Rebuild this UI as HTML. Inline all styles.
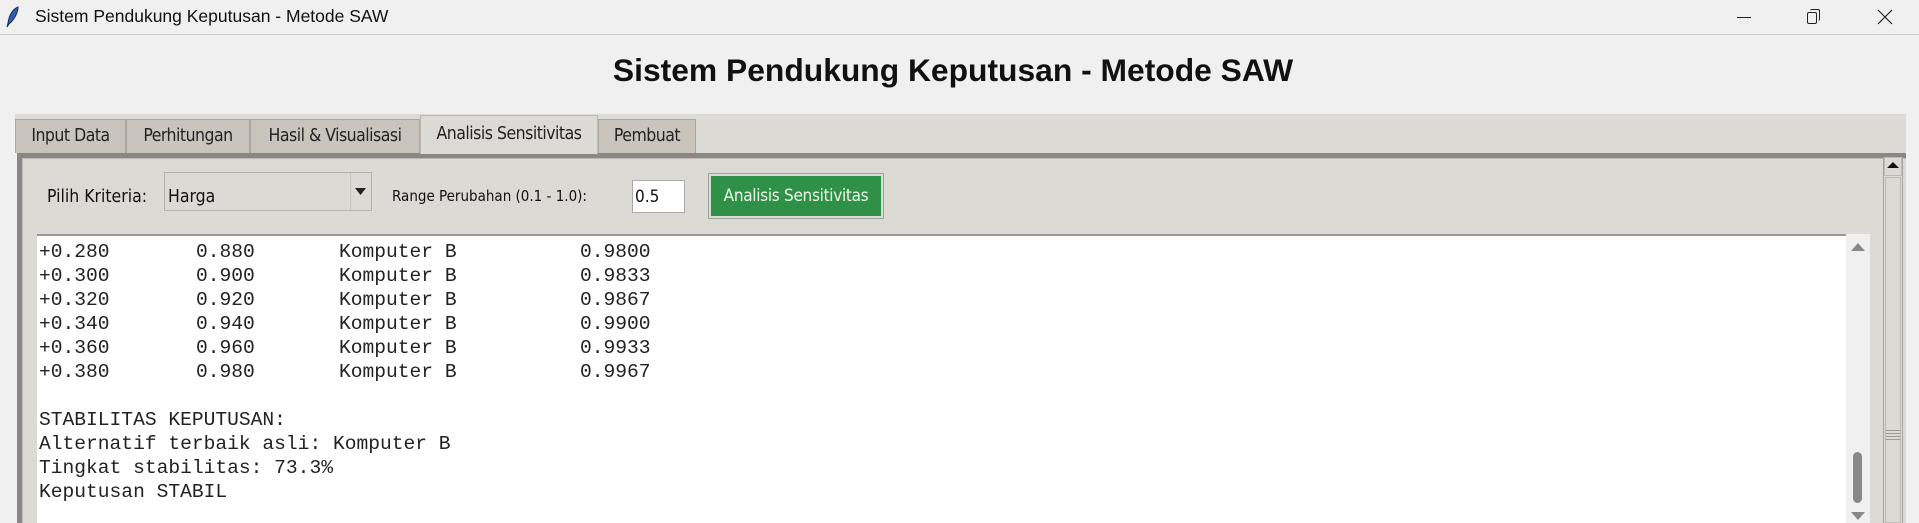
<!DOCTYPE html>
<html><head><meta charset="utf-8">
<style>
*{margin:0;padding:0;box-sizing:border-box}
html,body{width:1919px;height:523px;overflow:hidden;background:#f0f0f0;font-family:"Liberation Sans","DejaVu Sans",sans-serif;position:relative}
.a{position:absolute}
.tb{left:0;top:0;width:1919px;height:35px;background:#f0f0f0;border-bottom:1px solid #cfcfcf}
.tt{left:35px;top:6px;font-size:17.5px;color:#111}
.h1{left:0;width:1906px;top:52px;text-align:center;font-weight:bold;font-size:31.8px;color:#111}
.strip{left:15px;top:114px;width:1891px;height:39px;background:#dcdad5}
.tab{top:119px;height:34px;background:#c9c5bc;border:1px solid #a8a59e;border-bottom:none;font-size:17.5px;color:#222;text-align:center;line-height:33px;font-family:"DejaVu Sans Condensed","DejaVu Sans",sans-serif;letter-spacing:-0.5px;white-space:nowrap}
.tab.on{top:115px;height:39px;background:#dcdad5;line-height:37px}
.panel{left:17px;top:153px;width:1889px;height:370px;background:#dcdad5;border-top:5px solid #8a8884;border-left:5px solid #8a8884;box-shadow:inset 1px 1px 0 #bdbab4}
.lbl{font-size:16px;color:#111;font-family:"DejaVu Sans Condensed","DejaVu Sans",sans-serif;white-space:nowrap}
.txt{left:37px;top:234px;width:1809px;height:289px;background:#fff;border-top:2px solid #9a9893}
.m{position:absolute;font-family:"Liberation Mono","Courier New",monospace;font-size:19.6px;color:#222;line-height:24px;white-space:pre}
</style></head><body>
<div class="a tb"></div>
<svg class="a" style="left:6px;top:6px" width="14" height="22" viewBox="0 0 14 22"><path d="M12 1C7 3 3 9 2 17l-1 4 2-3C8 14 12 7 12 1z" fill="#2f5fae" stroke="#1a2f5a" stroke-width="1"/></svg>
<div class="a tt">Sistem Pendukung Keputusan - Metode SAW</div>
<div class="a" style="left:1737px;top:17px;width:14px;height:1px;background:#222"></div>
<div class="a" style="left:1807px;top:12px;width:10px;height:12px;border:1px solid #222;border-radius:2px"></div>
<div class="a" style="left:1810px;top:9px;width:10px;height:12px;border-top:1px solid #222;border-right:1px solid #222;border-radius:2px"></div>
<svg class="a" style="left:1877px;top:9px" width="16" height="16"><path d="M1 1L15 15M15 1L1 15" stroke="#222" stroke-width="1.2"/></svg>
<div class="a h1">Sistem Pendukung Keputusan - Metode SAW</div>
<div class="a strip"></div>
<div class="a tab" style="left:15px;width:111px">Input Data</div>
<div class="a tab" style="left:126px;width:124px">Perhitungan</div>
<div class="a tab" style="left:250px;width:170px">Hasil &amp; Visualisasi</div>
<div class="a tab" style="left:598px;width:98px">Pembuat</div>
<div class="a panel"></div>
<div class="a tab on" style="left:420px;width:178px;border-color:#bdbab4">Analisis Sensitivitas</div>
<div class="a lbl" style="left:47px;top:187px;font-size:17.5px">Pilih Kriteria:</div>
<div class="a" style="left:164px;top:172px;width:208px;height:39px;background:#dcdad5;border:1px solid #b5b2ac"></div>
<div class="a lbl" style="left:168px;top:187px;font-size:17.5px">Harga</div>
<div class="a" style="left:350px;top:173px;width:1px;height:37px;background:#c5c2bc"></div>
<svg class="a" style="left:355px;top:188px" width="11" height="8"><path d="M0 0H11L5.5 7z" fill="#222"/></svg>
<div class="a lbl" style="left:392px;top:187px;font-size:15px">Range Perubahan (0.1 - 1.0):</div>
<div class="a" style="left:632px;top:180px;width:53px;height:33px;background:#fff;border:1px solid #aaa"></div>
<div class="a lbl" style="left:635px;top:187px;font-size:17px">0.5</div>
<div class="a" style="left:708px;top:173px;width:176px;height:46px;background:#dcdad5;border:1px solid #9aa89a;padding:2px"><div style="width:100%;height:100%;background:#2f9148;color:#eef6e8;font-size:17px;text-align:center;line-height:40px;font-family:'DejaVu Sans Condensed','DejaVu Sans',sans-serif;letter-spacing:-0.3px">Analisis Sensitivitas</div></div>
<div class="a txt">
<div class="m" style="left:2px;top:4px">+0.280
+0.300
+0.320
+0.340
+0.360
+0.380

STABILITAS KEPUTUSAN:
Alternatif terbaik asli: Komputer B
Tingkat stabilitas: 73.3%
Keputusan STABIL</div>
<div class="m" style="left:159px;top:4px">0.880
0.900
0.920
0.940
0.960
0.980</div>
<div class="m" style="left:302px;top:4px">Komputer B
Komputer B
Komputer B
Komputer B
Komputer B
Komputer B</div>
<div class="m" style="left:543px;top:4px">0.9800
0.9833
0.9867
0.9900
0.9933
0.9967</div>
</div>
<div class="a" style="left:1846px;top:234px;width:24px;height:289px;background:#f0f0f0"></div>
<svg class="a" style="left:1851px;top:242px" width="14" height="10"><path d="M0 9L7 1L14 9z" fill="#888"/></svg>
<div class="a" style="left:1853px;top:452px;width:9px;height:51px;background:#888;border-radius:5px"></div>
<svg class="a" style="left:1851px;top:512px" width="14" height="10"><path d="M0 0L7 8L14 0z" fill="#888"/></svg>
<div class="a" style="left:1883px;top:157px;width:20px;height:366px;background:#dcdad5;border-left:1px solid #a8a59e;border-right:1px solid #a8a59e"></div>
<div class="a" style="left:1884px;top:157px;width:18px;height:19px;border:1px solid #bdbab4;background:#dcdad5"></div>
<svg class="a" style="left:1887px;top:161px" width="12" height="8"><path d="M0 7L6 1L12 7z" fill="#111"/></svg>
<div class="a" style="left:1885px;top:177px;width:16px;height:346px;border:1px solid #bdbab4"></div>
<div class="a" style="left:1886px;top:430px;width:14px;height:1px;background:#999;box-shadow:0 3px 0 #999,0 6px 0 #999,0 9px 0 #999"></div>
<div class="a" style="left:1906px;top:35px;width:13px;height:488px;background:#f0f0f0"></div>
</body></html>
